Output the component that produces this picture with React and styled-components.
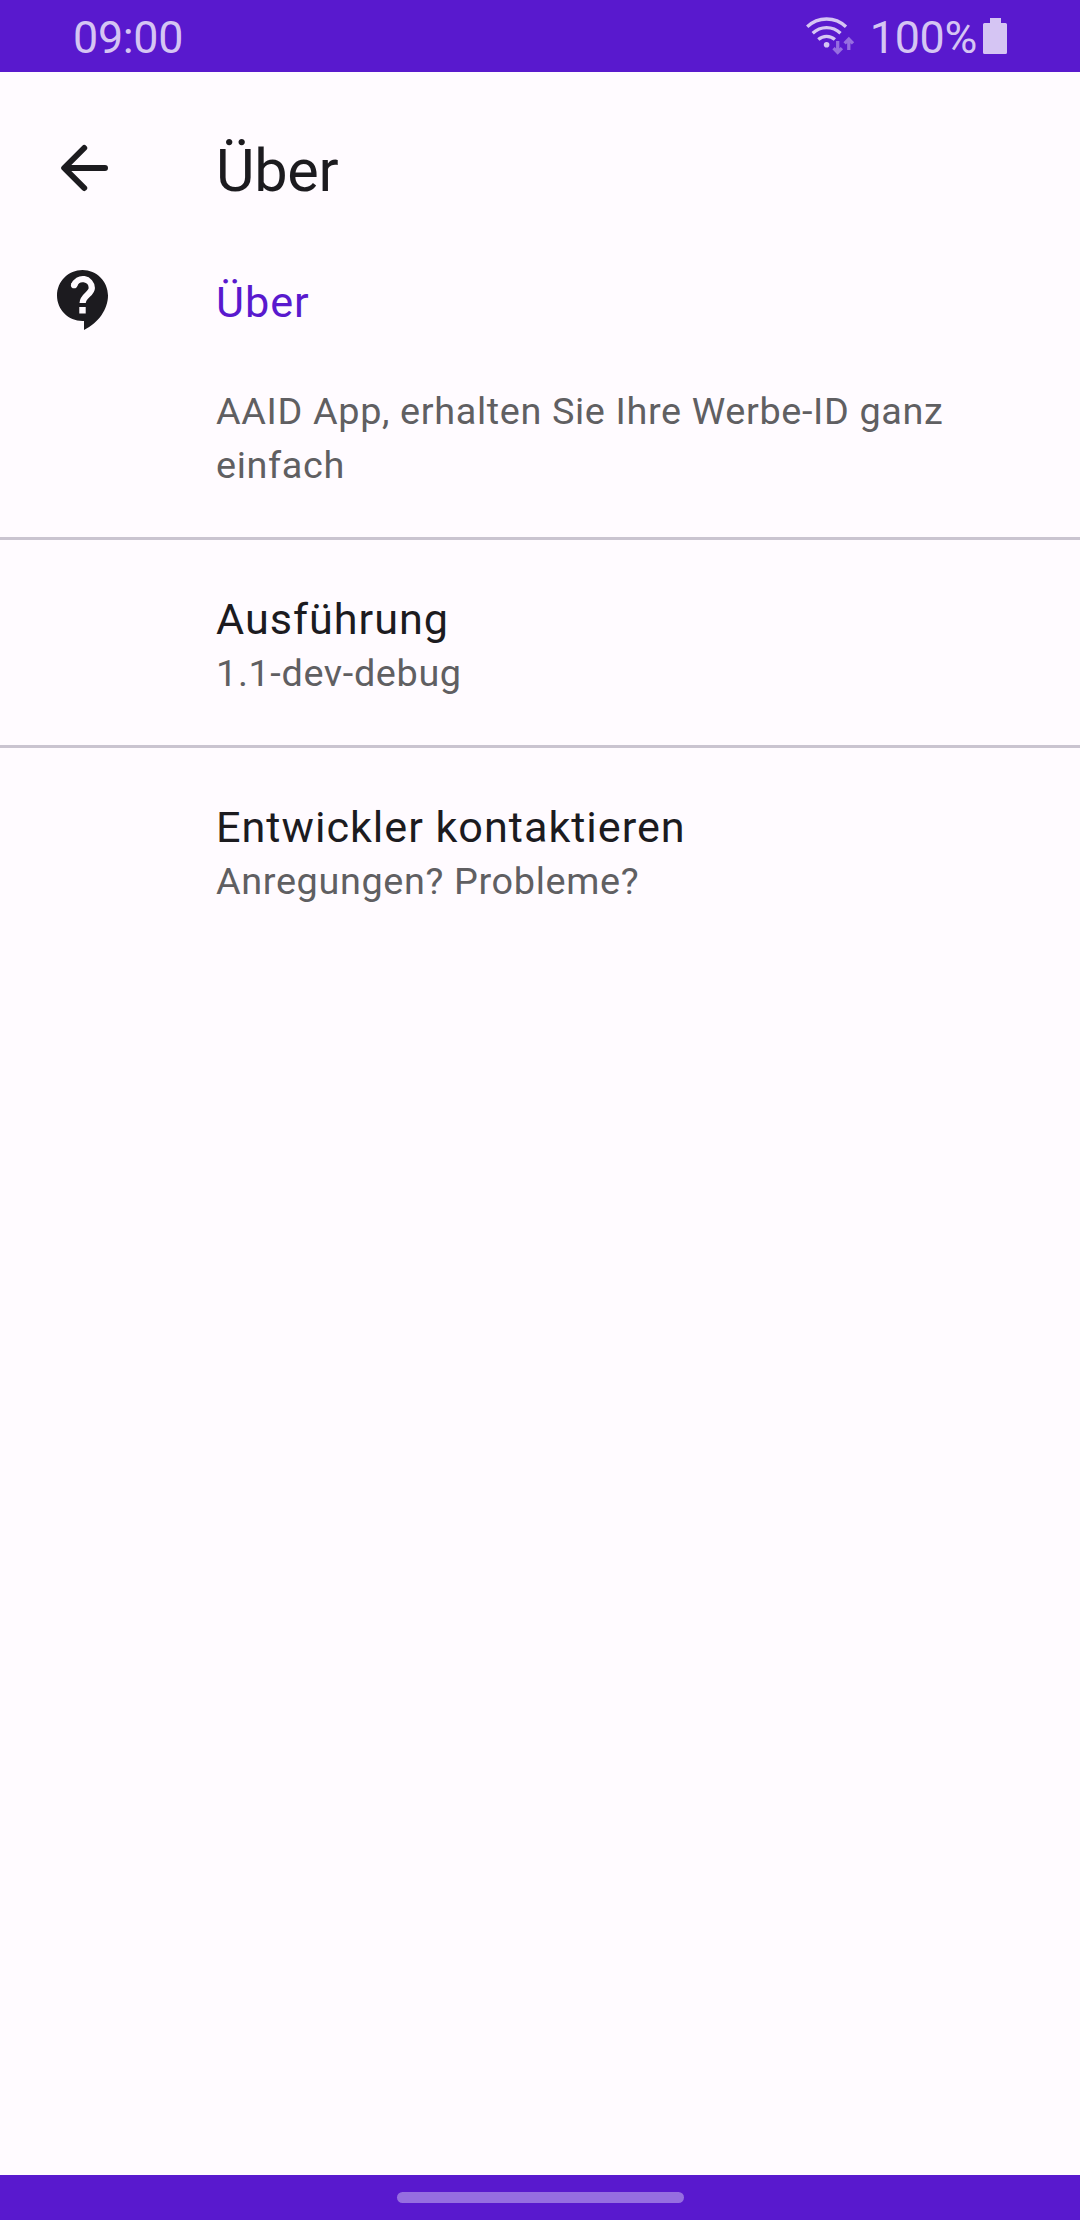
import React from "react";
import styled, { createGlobalStyle } from "styled-components";

const GlobalStyle = createGlobalStyle`
  * { box-sizing: border-box; }
  body { margin: 0; background: #fffbff; font-family: Roboto, sans-serif; }
`;

const Screen = styled.div`
  width: 1080px;
  height: 2220px;
  display: flex;
  flex-direction: column;
  background: #fffbff;
  color: #1c1b1f;
`;

const StatusBar = styled.header`
  height: 72px;
  flex: none;
  display: flex;
  justify-content: space-between;
  padding: 0 73px 0 73px;
  background: #5919ce;
  color: #d5c5f3;
  font-size: 44.8px;
  line-height: 75px;
  letter-spacing: -0.3px;
`;

const StatusIcons = styled.div`
  display: flex;
  align-items: flex-start;
`;

const WifiIcon = styled.svg`
  width: 50px;
  height: 38px;
  margin: 17px 14px 0 0;
`;

const BatteryIcon = styled.svg`
  width: 24px;
  height: 36px;
  margin: 18px 0 0 6px;
`;

const AppBar = styled.div`
  height: 173px;
  flex: none;
  display: flex;
  padding-top: 22px;
`;

const IconSlot = styled.div`
  width: 216px;
  flex: none;
  padding: ${(p) => p.$pad};
  svg { display: block; }
`;

const Title = styled.h1`
  margin: 0;
  font-size: 59.4px;
  font-weight: 400;
  line-height: 154px;
  letter-spacing: -0.3px;
`;

const List = styled.main`
  flex: 1;
`;

const Row = styled.section`
  display: flex;
  height: ${(p) => p.$height}px;
  border-bottom: ${(p) => (p.$last ? "none" : "3px solid #cac4d0")};
`;

const Body = styled.div`
  width: 780px;
  padding-top: ${(p) => p.$top}px;
`;

const Label = styled.h2`
  margin: 0;
  font-size: 43.2px;
  font-weight: 400;
  line-height: 53px;
  letter-spacing: 0.98px;
  color: ${(p) => (p.$accent ? "#5919ce" : "#1c1b1f")};
`;

const Detail = styled.p`
  margin: ${(p) => p.$gap || 0}px 0 0;
  font-size: 37.8px;
  line-height: 54px;
  letter-spacing: 0.64px;
  color: #605f62;
`;

const NavBar = styled.footer`
  height: 45px;
  flex: none;
  display: flex;
  justify-content: center;
  padding-top: 17px;
  background: #5919ce;
`;

const Handle = styled.div`
  width: 287px;
  height: 11px;
  border-radius: 6px;
  background: #966ee0;
`;

export default function App() {
  return (
    <>
      <GlobalStyle />
      <Screen>
        <StatusBar>
          <span>09:00</span>
          <StatusIcons>
            <WifiIcon viewBox="0 0 50 38" fill="none" stroke="#d5c5f3" strokeWidth="3.3">
              <path d="M1.200 9.800a28 28 0 0 1 38.800 0M6.700 16.300a20 20 0 0 1 27.800 0M12.300 22.500a12.500 12.500 0 0 1 16.600 0" />
              <circle cx="20.600" cy="27.700" r="2.800" fill="#d5c5f3" stroke="none" />
              <path stroke="#966ee0" d="M31.700 24v10.500M27.500 31.200l4.200 4.200 4.200-4.200M42.800 33V22.500M38.600 26.300l4.200-4.200 4.200 4.200" />
            </WifiIcon>
            <span>100%</span>
            <BatteryIcon viewBox="0 0 24 36" fill="#d5c5f3">
              <path d="M7 0h11v5h4.500a1.500 1.500 0 0 1 1.500 1.500V34.500a1.500 1.500 0 0 1-1.500 1.500H1.500A1.500 1.500 0 0 1 0 34.500V6.500A1.500 1.500 0 0 1 1.500 5H7z" />
            </BatteryIcon>
          </StatusIcons>
        </StatusBar>
        <AppBar>
          <IconSlot $pad="50px 0 0 58px">
            <svg width="54" height="48" viewBox="0 0 54 48" fill="none" stroke="#1c1b1f" strokeWidth="6" strokeLinecap="round" strokeLinejoin="round">
              <path d="M47 24H6.500M26.200 4 6.200 24l20 20" />
            </svg>
          </IconSlot>
          <Title>Über</Title>
        </AppBar>
        <List>
          <Row $height={295}>
            <IconSlot $pad="19px 0 0 48px">
              <svg width="72" height="72" viewBox="0 0 24 24">
                <path fill="#1c1b1f" d="M11.500 2C6.810 2 3 5.810 3 10.500S6.810 19 11.500 19h.500v3c4.860-2.340 8-7 8-11.500C20 5.810 16.190 2 11.500 2z" />
                <path fill="none" stroke="#fffbff" strokeWidth="2.1" d="M8.750 7.100A3 3 0 0 1 14.600 8c0 2-3.050 2.600-3.050 5" />
                <circle cx="8.700" cy="7.050" r="1.050" fill="#fffbff" />
                <path fill="#fffbff" d="M10.430 14.330h2.140v2.170h-2.140z" />
              </svg>
            </IconSlot>
            <Body $top={31}>
              <Label $accent>Über</Label>
              <Detail $gap={55}>AAID App, erhalten Sie Ihre Werbe-ID ganz einfach</Detail>
            </Body>
          </Row>
          <Row $height={208}>
            <IconSlot />
            <Body $top={53}>
              <Label>Ausführung</Label>
              <Detail>1.1-dev-debug</Detail>
            </Body>
          </Row>
          <Row $height={208} $last>
            <IconSlot />
            <Body $top={53}>
              <Label>Entwickler kontaktieren</Label>
              <Detail>Anregungen? Probleme?</Detail>
            </Body>
          </Row>
        </List>
        <NavBar>
          <Handle />
        </NavBar>
      </Screen>
    </>
  );
}
